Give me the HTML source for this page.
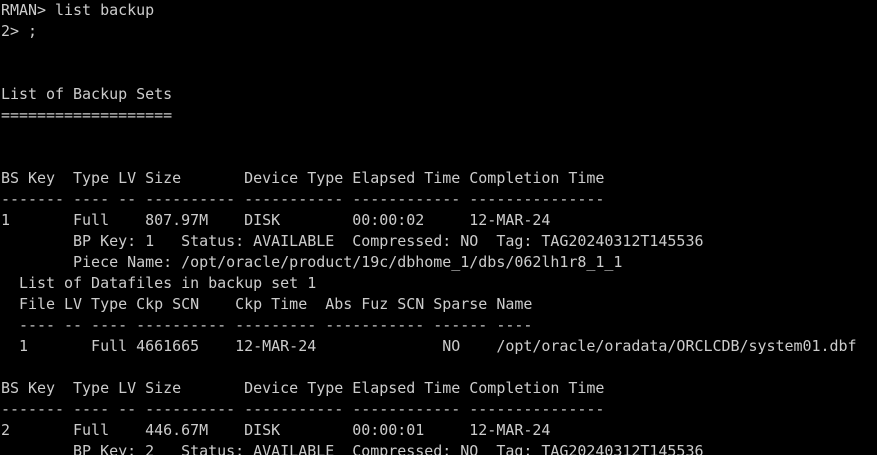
<!DOCTYPE html>
<html><head><style>
html,body{margin:0;padding:0;background:#000;width:877px;height:455px;overflow:hidden}
pre{margin:0;padding:0 0 0 1px;font-family:"DejaVu Sans Mono","Liberation Mono",monospace;font-size:15px;line-height:21px;color:#cccccc;white-space:pre;letter-spacing:-0.025px}
</style></head><body><pre>RMAN&gt; list backup
2&gt; ;


List of Backup Sets
===================


BS Key  Type LV Size       Device Type Elapsed Time Completion Time
------- ---- -- ---------- ----------- ------------ ---------------
1       Full    807.97M    DISK        00:00:02     12-MAR-24
        BP Key: 1   Status: AVAILABLE  Compressed: NO  Tag: TAG20240312T145536
        Piece Name: /opt/oracle/product/19c/dbhome_1/dbs/062lh1r8_1_1
  List of Datafiles in backup set 1
  File LV Type Ckp SCN    Ckp Time  Abs Fuz SCN Sparse Name
  ---- -- ---- ---------- --------- ----------- ------ ----
  1       Full 4661665    12-MAR-24              NO    /opt/oracle/oradata/ORCLCDB/system01.dbf

BS Key  Type LV Size       Device Type Elapsed Time Completion Time
------- ---- -- ---------- ----------- ------------ ---------------
2       Full    446.67M    DISK        00:00:01     12-MAR-24
        BP Key: 2   Status: AVAILABLE  Compressed: NO  Tag: TAG20240312T145536</pre></body></html>
